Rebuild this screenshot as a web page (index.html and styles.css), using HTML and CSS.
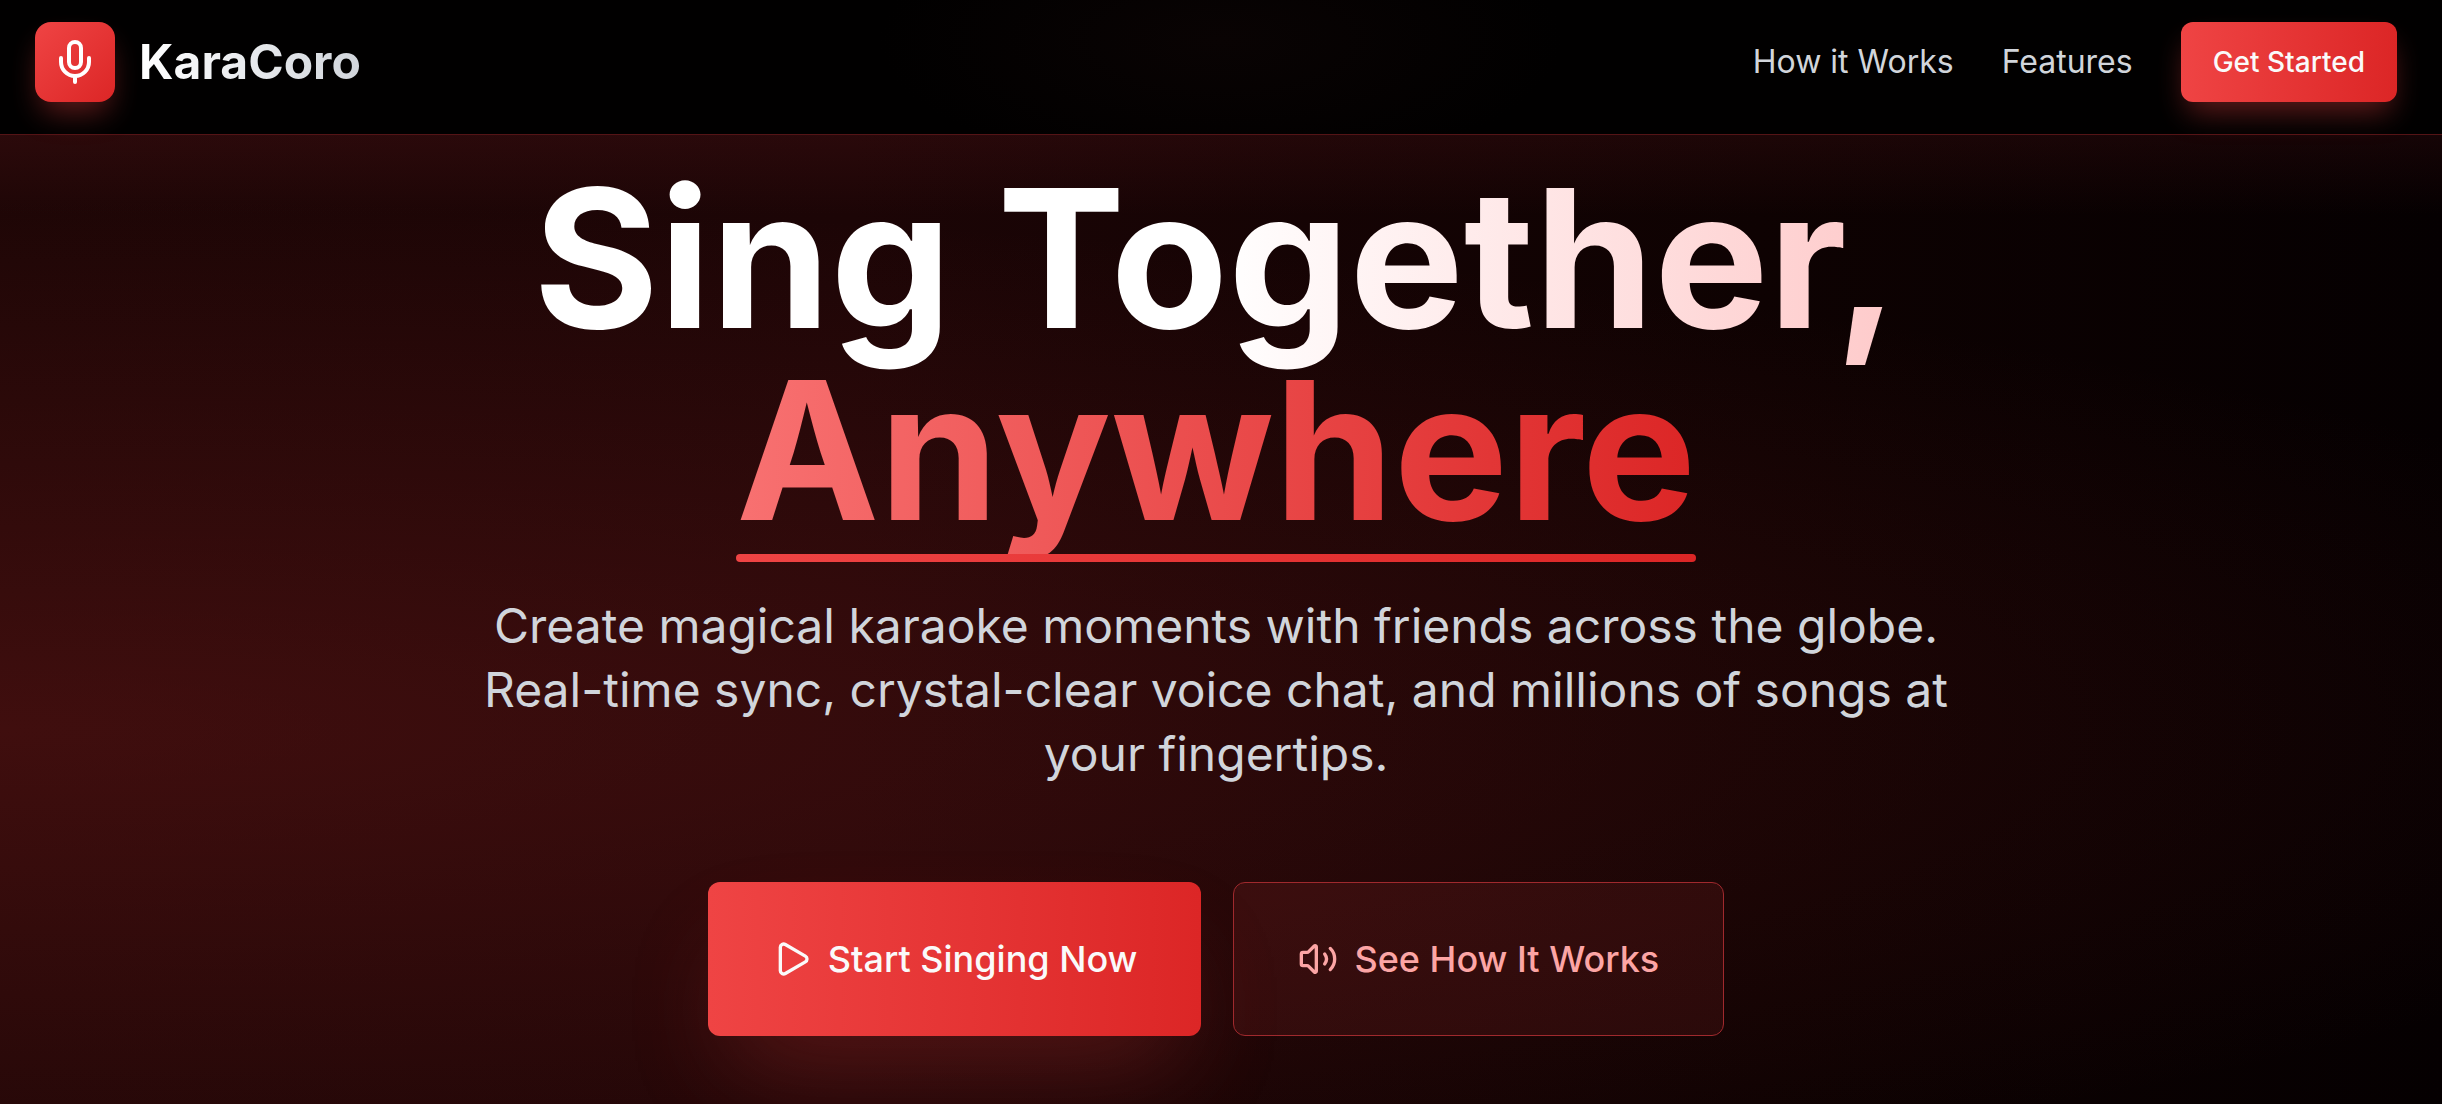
FILE: index.html
```
<!DOCTYPE html>
<html lang="en">
<head>
<meta charset="UTF-8">
<meta name="viewport" content="width=device-width, initial-scale=1">
<title>KaraCoro</title>
<link rel="stylesheet" href="styles.css">
</head>
<body>
<header class="navbar">
  <div class="brand">
    <span class="brand-icon">
      <svg class="icon icon-lg" viewBox="0 0 24 24" aria-hidden="true">
        <path d="M12 19v3"/>
        <path d="M19 10v2a7 7 0 0 1-14 0v-2"/>
        <rect x="9" y="2" width="6" height="13" rx="3"/>
      </svg>
    </span>
    <span class="brand-name">KaraCoro</span>
  </div>
  <nav class="nav-links">
    <a href="#how-it-works">How it Works</a>
    <a href="#features">Features</a>
    <button type="button" class="btn btn-primary btn-small">Get Started</button>
  </nav>
</header>

<main class="hero">
  <h1 class="hero-title">Sing Together,<br><span class="highlight">Anywhere</span></h1>
  <p class="hero-text">Create magical karaoke moments with friends across the globe. Real-time sync, crystal-clear voice chat, and millions of songs at your fingertips.</p>
  <div class="hero-actions">
    <button type="button" class="btn btn-primary btn-large">
      <svg class="icon" viewBox="0 0 24 24" aria-hidden="true">
        <path d="M5 5a2 2 0 0 1 3.008-1.728l11.997 6.998a2 2 0 0 1 .003 3.458l-12 7A2 2 0 0 1 5 19z"/>
      </svg>
      Start Singing Now
    </button>
    <button type="button" class="btn btn-outline btn-large">
      <svg class="icon" viewBox="0 0 24 24" aria-hidden="true">
        <path d="M11 4.702a.705.705 0 0 0-1.203-.498L6.413 7.587A1.4 1.4 0 0 1 5.416 8H3a1 1 0 0 0-1 1v6a1 1 0 0 0 1 1h2.416a1.4 1.4 0 0 1 .997.413l3.383 3.384A.705.705 0 0 0 11 19.298z"/>
        <path d="M16 9a5 5 0 0 1 0 6"/>
        <path d="M19.364 18.364a9 9 0 0 0 0-12.728"/>
      </svg>
      See How It Works
    </button>
  </div>
</main>
</body>
</html>
```
FILE: styles.css
```
* { box-sizing: border-box; }

body {
  margin: 0;
  min-height: 100vh;
  padding-right: 10px;
  font-family: Inter, sans-serif;
  color: #fff;
  background:
    linear-gradient(to bottom, rgba(153, 40, 48, 0.11) 135px, transparent 215px),
    radial-gradient(ellipse 120% 48% at 0% 66%, rgba(127, 29, 29, 0.35), transparent),
    linear-gradient(to right, #1e0606 0%, #1c0506 35%, #0e0202 72%, #050001 100%);
}

.navbar {
  display: flex;
  align-items: center;
  justify-content: space-between;
  height: 135px;
  margin-right: -10px;
  padding: 22px 45px 32px 35px;
  background: radial-gradient(ellipse 14% 100% at 50% 30%, #090303, #010000);
  border-bottom: 1px solid #541416;
}
.brand {
  display: flex;
  align-items: center;
  gap: 24px;
}
.brand-icon {
  display: flex;
  align-items: center;
  justify-content: center;
  width: 80px;
  height: 80px;
  border-radius: 16px;
  background: linear-gradient(to bottom right, #ef4444, #dc2626);
  box-shadow: 0 16px 30px -6px rgba(239, 68, 68, 0.4);
}
.brand-name {
  font-size: 48px;
  line-height: 64px;
  font-weight: 700;
  background: linear-gradient(to right, #fff, #d1d5db);
  -webkit-background-clip: text;
  background-clip: text;
  color: transparent;
}
.nav-links {
  display: flex;
  align-items: center;
  gap: 48px;
}
.nav-links a {
  color: #d1d5db;
  font-size: 32px;
  line-height: 48px;
  text-decoration: none;
}
.nav-links a:hover { color: #f87171; }

.icon {
  width: 40px;
  height: 40px;
  fill: none;
  stroke: currentColor;
  stroke-width: 2;
  stroke-linecap: round;
  stroke-linejoin: round;
}
.icon-lg {
  width: 48px;
  height: 48px;
}

.btn {
  display: flex;
  align-items: center;
  justify-content: center;
  gap: 16px;
  border: none;
  border-radius: 12px;
  color: #fafafa;
  font-family: inherit;
  font-weight: 500;
  cursor: pointer;
}
.btn-primary { background: linear-gradient(to right, #ef4444, #dc2626); }
.btn-small {
  height: 80px;
  padding: 0 32px;
  font-size: 28px;
  box-shadow: 0 16px 30px -6px rgba(239, 68, 68, 0.4);
}
.btn-large {
  height: 154px;
  padding: 0 64px;
  font-size: 36px;
}
.btn-large.btn-primary { box-shadow: 0 50px 100px -24px rgba(239, 68, 68, 0.25); }
.btn-outline {
  background: rgba(239, 68, 68, 0.1);
  border: 1px solid #a0292d;
  color: #fca5a5;
}

.hero {
  display: flex;
  flex-direction: column;
  align-items: center;
  padding: 27px 32px 68px;
  text-align: center;
}
.hero-title {
  margin: 0 0 48px;
  font-size: 192px;
  line-height: 192px;
  font-weight: 700;
  background: linear-gradient(to right, #fff 50%, #fecaca);
  -webkit-background-clip: text;
  background-clip: text;
  color: transparent;
}
.highlight {
  position: relative;
  background: linear-gradient(to right, #f87171, #dc2626);
  -webkit-background-clip: text;
  background-clip: text;
}
.highlight::after {
  content: "";
  position: absolute;
  left: 0;
  right: 0;
  bottom: 4px;
  height: 8px;
  border-radius: 4px;
  background: linear-gradient(to right, #ef4444, #dc2626);
}
.hero-text {
  max-width: 1536px;
  margin: 0 0 96px;
  color: #d1d5db;
  font-size: 48px;
  line-height: 64px;
}
.hero-actions {
  display: flex;
  gap: 32px;
}
```
